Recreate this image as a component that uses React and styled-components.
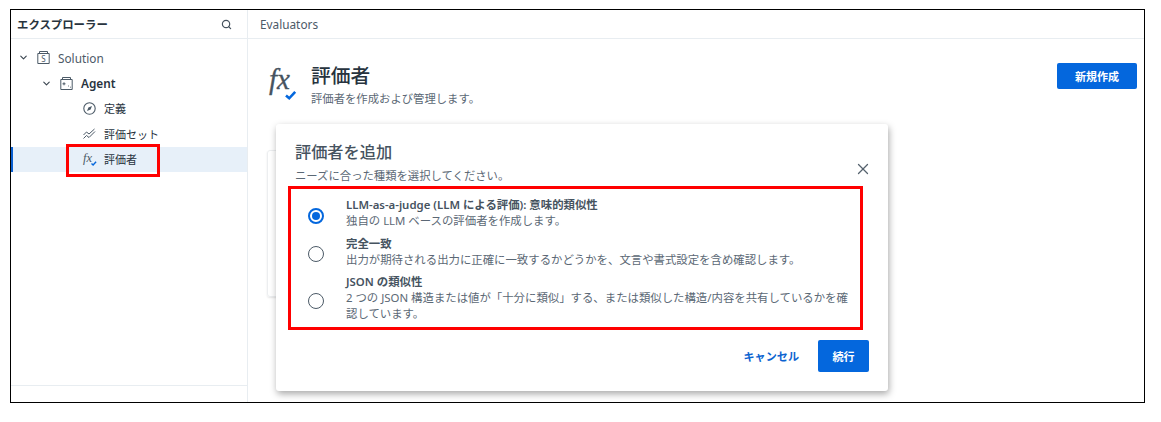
import React from 'react';
import styled, { createGlobalStyle } from 'styled-components';
import { ChevronDown, Search, X } from 'lucide-react';

const Global = createGlobalStyle`
  html, body { margin: 0; padding: 0; background: #fff; }
  body { font-family: "Noto Sans", "Noto Sans CJK JP", sans-serif; color: #2c3a47; }
`;
const Page = styled.div`
  width: 1161px; height: 422px; padding: 9px 17px 19px 10px; box-sizing: border-box; background: #fff;
`;
const Frame = styled.div`
  position: relative; width: 1135px; height: 394px; box-sizing: border-box; border: 1px solid #000;
  display: flex; overflow: hidden; background: #fff;
`;
const Sidebar = styled.aside`
  width: 236px; flex: none; border-right: 1px solid #e8edf1; display: flex; flex-direction: column;
`;
const SideHead = styled.div`
  height: 28px; flex: none; padding: 0 15px 0 6px; display: flex; align-items: center; justify-content: space-between;
  border-bottom: 1px solid #e8edf1; font-size: 11.4px; font-weight: 700; color: #27333e;
`;
const Tree = styled.div`
  flex: 1; padding-top: 6px;
`;
const Row = styled.div`
  height: 25.4px; display: flex; align-items: center; font-size: ${p => p.$latin ? 11.8 : 11}px; gap: 7px;
  padding-left: ${p => p.$indent}px;
  color: ${p => p.$dim ? '#4c5a67' : '#27333e'};
  font-weight: ${p => p.$bold ? 600 : 400};
  background: ${p => p.$active ? '#e7f0f9' : 'transparent'};
  box-shadow: ${p => p.$active ? 'inset 2px 0 0 #0a5fd0' : 'none'};
`;
const Caret = styled(ChevronDown)`
  width: 11px; height: 11px; color: #39444f; stroke-width: 2.4;
`;
const Glyph = styled.svg`
  width: 15px; height: 15px; flex: none; display: block; overflow: visible;
`;
const SideFoot = styled.div`
  height: 16px; flex: none; border-top: 1px solid #e8edf1;
`;
const Main = styled.main`
  flex: 1; display: flex; flex-direction: column; min-width: 0;
`;
const Crumb = styled.div`
  height: 29px; box-sizing: border-box; flex: none; padding-left: 12px; display: flex; align-items: center; border-bottom: 1px solid #e8edf1;
  font-size: 11.8px; color: #4c5a67;
`;
const Content = styled.div`
  position: relative; flex: 1; padding: 24px 7px 0 19px;
`;
const HeadRow = styled.div`
  display: flex; align-items: flex-start;
`;
const BigIcon = styled.svg`
  width: 32px; height: 32px; flex: none; margin-top: 6px; margin-right: 12px; overflow: visible;
`;
const TitleBlock = styled.div`
  flex: 1;
`;
const Title = styled.h1`
  margin: 0; font-size: 19.8px; line-height: 26px; font-weight: 500; color: #27333e;
`;
const Sub = styled.p`
  margin: 3px 0 0; font-size: 11.35px; line-height: 14px; color: #5b6875;
`;
const Primary = styled.button`
  border: 0; border-radius: 2px; background: #0467dd; color: #fff; font: 700 11px "Noto Sans", "Noto Sans CJK JP", sans-serif;
  width: ${p => p.$w}px; height: ${p => p.$h}px; padding: 0; flex: none;
`;
const BehindCard = styled.div`
  margin-top: 44px; width: 60px; height: 147px; border-radius: 3px; box-sizing: border-box;
  border: 1px solid #eceef0; box-shadow: 0 1px 2px rgba(0,0,0,.1);
`;
const Dialog = styled.div`
  position: absolute; left: 28px; top: 85px; width: 612px; height: 267px; box-sizing: border-box;
  background: #fff; border-radius: 3px; box-shadow: 1px 3px 7px rgba(0,0,0,.34);
  padding: 16px 19px 19px 19px; display: flex; flex-direction: column;
`;
const DialogTitle = styled.h2`
  margin: 0; font-size: 16.2px; line-height: 24px; font-weight: 500; color: #46535f;
`;
const DialogSub = styled.p`
  margin: 5px 0 0; font-size: 11.35px; line-height: 14px; color: #5b6875;
`;
const Close = styled(X)`
  position: absolute; right: 16px; top: 36px; width: 18px; height: 18px; color: #55626e; stroke-width: 1.7;
`;
const Options = styled.div`
  margin-top: 14px; display: flex; flex-direction: column; gap: 6.5px; padding-left: 13px;
`;
const Option = styled.label`
  display: flex; align-items: center; gap: 22px;
`;
const Radio = styled.span`
  width: 16px; height: 16px; box-sizing: border-box; flex: none; border-radius: 50%; margin-top: 5px;
  border: ${p => p.$on ? '2px solid #0467dd' : '1.6px solid #4c5a67'};
  display: flex; align-items: center; justify-content: center;
  &::after { content: ''; width: 8px; height: 8px; border-radius: 50%; background: ${p => p.$on ? '#0467dd' : 'transparent'}; }
`;
const OptionText = styled.div`
  flex: 1; min-width: 0; padding-right: 16px;
`;
const OptionName = styled.div`
  font-size: 11.4px; line-height: 16px; font-weight: 600; color: #46535f;
`;
const OptionDesc = styled.div`
  font-size: 11.4px; line-height: 16px; color: #5b6875;
`;
const Actions = styled.div`
  margin-top: auto; display: flex; justify-content: flex-end; align-items: center; gap: 19px;
`;
const Ghost = styled.button`
  border: 0; background: none; padding: 0; color: #0a63d0; font: 700 11.1px "Noto Sans", "Noto Sans CJK JP", sans-serif;
`;
const Highlight = styled.div`
  position: absolute; left: ${p => p.$x}px; top: ${p => p.$y}px; width: ${p => p.$w}px; height: ${p => p.$h}px;
  box-sizing: border-box; border: 3px solid #f00; pointer-events: none;
`;

const SolutionIcon = () => (
  <Glyph viewBox="0 0 15 15" fill="none" stroke="#4c5a67" strokeWidth="1">
    <path d="M3.5 3V1.5h8V3M1.8 3.5h11.4v10H1.8z" />
    <text x="7.5" y="11.6" textAnchor="middle" fontSize="8" stroke="none" fill="#4c5a67" fontFamily="Noto Sans">S</text>
  </Glyph>
);
const AgentIcon = () => (
  <Glyph viewBox="0 0 15 15" fill="none" stroke="#4c5a67" strokeWidth="1">
    <path d="M3.5 3V1.5h8V3M1.8 3.5h11.4v10H1.8z" />
    <path d="M5 6.3v3M3.5 7.8h3" />
    <path d="M9 10h.8M11 11.2h.8" />
  </Glyph>
);
const CompassIcon = () => (
  <Glyph viewBox="0 0 15 15" fill="none" stroke="#4c5a67" strokeWidth="1.1">
    <circle cx="7.5" cy="7.5" r="5.7" />
    <path d="M10 5L8.6 8.6 5 10l1.4-3.6z" fill="#4c5a67" stroke="none" />
  </Glyph>
);
const TrendIcon = () => (
  <Glyph viewBox="0 0 15 15" fill="none" stroke="#4c5a67" strokeWidth="1">
    <path d="M1.5 9l3-3 2.5 2 5.5-5" />
    <path d="M1.5 12.5l3-3 2.5 2 6-6" />
  </Glyph>
);
const FxSmall = () => (
  <Glyph viewBox="0 0 15 15" fill="none">
    <text x="1" y="10" fontFamily="Liberation Serif" fontStyle="italic" fontSize="12.5" fill="#4c5a67">fx</text>
    <path d="M9.5 11.5l1.6 1.5 3-3.2" stroke="#0467dd" strokeWidth="1.4" />
  </Glyph>
);
const FxBig = () => (
  <BigIcon viewBox="0 0 32 32" fill="none">
    <text x="2" y="20" fontFamily="Liberation Serif" fontStyle="italic" fontSize="29" fill="#46535f" stroke="#46535f" strokeWidth=".3">fx</text>
    <path d="M19 26.5l3.2 2.8 6-6.5" stroke="#0467dd" strokeWidth="2.6" />
  </BigIcon>
);

export default function App() {
  return (
    <Page>
      <Global />
      <Frame>
        <Sidebar>
          <SideHead>
            エクスプローラー
            <Search size={11} strokeWidth={2.6} color="#46535f" />
          </SideHead>
          <Tree>
            <Row $indent={7} $dim $latin><Caret /><SolutionIcon />Solution</Row>
            <Row $indent={30} $bold $latin><Caret /><AgentIcon />Agent</Row>
            <Row $indent={71}><CompassIcon />定義</Row>
            <Row $indent={71}><TrendIcon />評価セット</Row>
            <Row $indent={71} $active><FxSmall />評価者</Row>
          </Tree>
          <SideFoot />
        </Sidebar>
        <Main>
          <Crumb>Evaluators</Crumb>
          <Content>
            <HeadRow>
              <FxBig />
              <TitleBlock>
                <Title>評価者</Title>
                <Sub>評価者を作成および管理します。</Sub>
              </TitleBlock>
              <Primary $w={80} $h={26}>新規作成</Primary>
            </HeadRow>
            <BehindCard />
            <Dialog>
              <DialogTitle>評価者を追加</DialogTitle>
              <DialogSub>ニーズに合った種類を選択してください。</DialogSub>
              <Close />
              <Options>
                <Option>
                  <Radio $on />
                  <OptionText>
                    <OptionName>LLM-as-a-judge (LLM による評価): 意味的類似性</OptionName>
                    <OptionDesc>独自の LLM ベースの評価者を作成します。</OptionDesc>
                  </OptionText>
                </Option>
                <Option>
                  <Radio />
                  <OptionText>
                    <OptionName>完全一致</OptionName>
                    <OptionDesc>出力が期待される出力に正確に一致するかどうかを、文言や書式設定を含め確認します。</OptionDesc>
                  </OptionText>
                </Option>
                <Option>
                  <Radio />
                  <OptionText>
                    <OptionName>JSON の類似性</OptionName>
                    <OptionDesc>2 つの JSON 構造または値が「十分に類似」する、または類似した構造/内容を共有しているかを確認しています。</OptionDesc>
                  </OptionText>
                </Option>
              </Options>
              <Actions>
                <Ghost>キャンセル</Ghost>
                <Primary $w={51} $h={32}>続行</Primary>
              </Actions>
            </Dialog>
          </Content>
        </Main>
        <Highlight $x={55} $y={134} $w={94} $h={33} />
        <Highlight $x={277} $y={176} $w={575} $h={144} />
      </Frame>
    </Page>
  );
}
